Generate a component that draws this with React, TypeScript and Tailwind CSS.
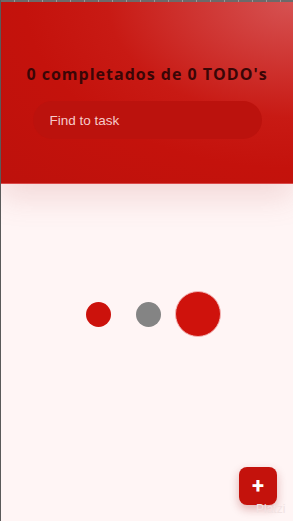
import React from 'react';

const Dot: React.FC<{ className: string }> = ({ className }) => <span className={`block rounded-full ${className}`} />;

export default function App() {
  return (
    <div className="relative h-[521px] w-[293px] overflow-hidden border-l border-[#5a5a5a] bg-[#fff5f5] font-['Roboto',sans-serif]">
      <div className="h-[2px] w-full bg-[repeating-linear-gradient(90deg,#6b6b6b_0px,#6b6b6b_13px,#9a9a9a_13px,#9a9a9a_14px)]" />
      <header className="relative z-10 flex h-[182px] flex-col items-center border-b border-[#d94a4a] bg-[radial-gradient(ellipse_at_top_right,#d65252_0%,#c81a14_45%,#c4120c_65%,#bd110c_100%)] pt-[60px] shadow-[0_14px_28px_rgba(190,90,90,0.18)]">
        <h1 className="font-['Open_Sans',sans-serif] text-[16px] font-bold tracking-[1px] text-[#3a0606]">
          0 completados de 0 TODO's
        </h1>
        <input
          placeholder="Find to task"
          className="mt-[15px] h-[38px] w-[229px] rounded-[19px] bg-[#bb120d] pl-[17px] font-['Liberation_Sans',sans-serif] text-[13.5px] text-white outline-none placeholder:text-[#f6caca]"
        />
      </header>
      <main className="flex h-[260px] items-center justify-center pl-[12px]">
        <div className="flex items-center">
          <Dot className="h-[25px] w-[25px] bg-[#cc120c]" />
          <Dot className="ml-[25px] h-[25px] w-[25px] bg-[#848484]" />
          <Dot className="ml-[14px] h-[46px] w-[46px] border border-[#f3b5b5] bg-[#cf120c]" />
        </div>
      </main>
      <button className="absolute left-[238px] top-[467px] flex h-[38px] w-[38px] items-center justify-center rounded-lg bg-[#c4120c] text-[22px] font-bold leading-none text-white shadow-[0_4px_10px_rgba(150,20,20,0.3)]">
        +
      </button>
      <span className="absolute left-[255px] top-[500px] whitespace-nowrap font-['Liberation_Sans',sans-serif] text-[12px] text-[#f1e3e3]">Platzi</span>
    </div>
  );
}
